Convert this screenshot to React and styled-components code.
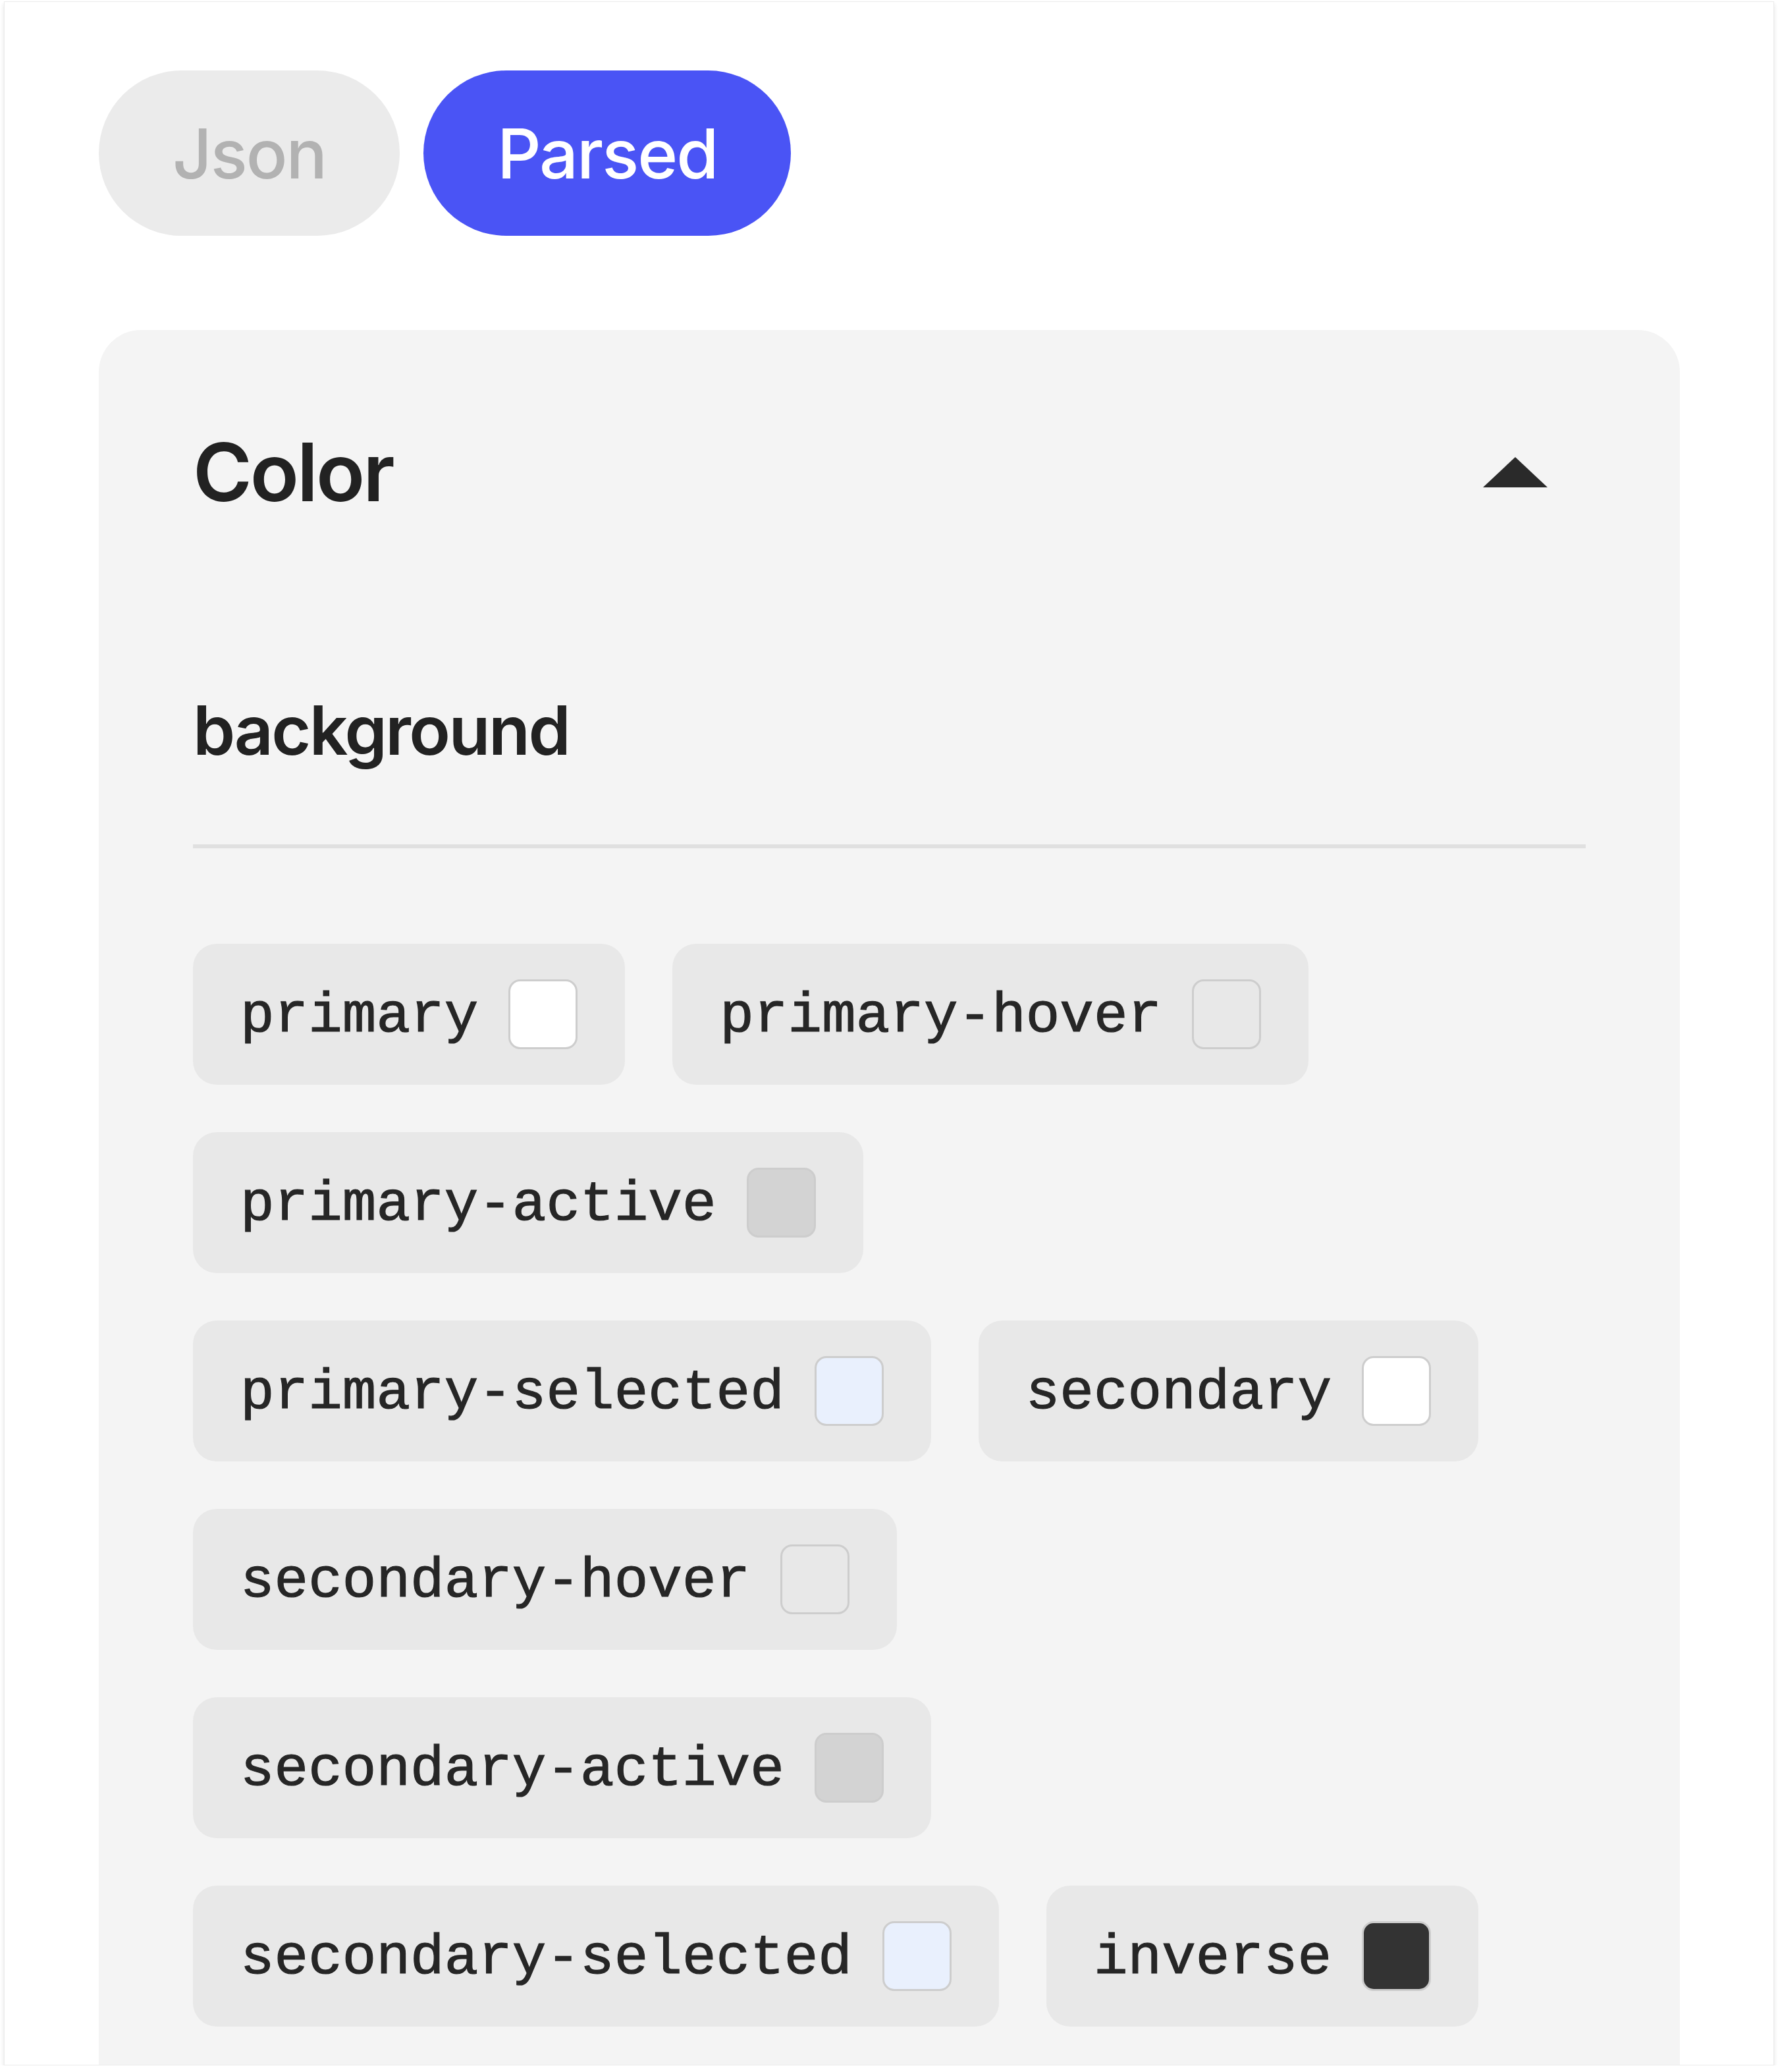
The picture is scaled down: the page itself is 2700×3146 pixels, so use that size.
import React from "react";
import styled, { createGlobalStyle } from "styled-components";

const Global = createGlobalStyle`
  html, body { margin: 0; padding: 0; background: #ffffff; }
  body { font-family: Inter, "Noto Sans", sans-serif; }
`;

const Frame = styled.div`
  box-sizing: border-box;
  margin: 2px 0 0 6px;
  width: 2688px;
  height: 3134px;
  background: #ffffff;
  border: 1px solid #ececec;
  box-shadow: 0 4px 6px rgba(0, 0, 0, 0.12);
  overflow: hidden;
  padding: 104px 142px 0 143px;
`;

const Tabs = styled.div`
  display: flex;
  gap: 36px;
`;

const Tab = styled.button`
  box-sizing: border-box;
  height: 251px;
  padding: 0 112px;
  border: none;
  border-radius: 126px;
  font-family: Inter, "Noto Sans", sans-serif;
  font-weight: 500;
  font-size: 104px;
  letter-spacing: -0.02em;
  line-height: 1;
  background: ${(p) => (p.$active ? "#4a54f5" : "#ebebeb")};
  color: ${(p) => (p.$active ? "#ffffff" : "#b2b2b2")};
`;

const Card = styled.section`
  margin-top: 143px;
  background: #f4f4f4;
  border-radius: 64px;
  padding: 143px 143px;
`;

const CardHeader = styled.div`
  display: flex;
  align-items: center;
  justify-content: space-between;
  height: 146px;
`;

const CardTitle = styled.h2`
  margin: 0;
  font-family: Inter, "Noto Sans", sans-serif;
  font-weight: 600;
  font-size: 122px;
  letter-spacing: -0.025em;
  line-height: 1;
  color: #222222;
`;

const Caret = styled.svg`
  width: 98px;
  height: 46px;
  margin-right: 58px;
  fill: #2a2a2a;
`;

const GroupTitle = styled.h3`
  margin: 256px 0 0;
  font-family: Inter, "Noto Sans", sans-serif;
  font-weight: 600;
  font-size: 103px;
  letter-spacing: -0.025em;
  line-height: 125px;
  color: #222222;
`;

const Divider = styled.div`
  margin-top: 111px;
  height: 6px;
  background: #e0e0e0;
`;

const ChipList = styled.div`
  margin-top: 145px;
  display: flex;
  flex-wrap: wrap;
  gap: 72px;
`;

const Chip = styled.div`
  display: inline-flex;
  align-items: center;
  gap: 46px;
  padding: 54px 72px;
  background: #e8e8e8;
  border-radius: 36px;
`;

const ChipName = styled.span`
  padding-top: 6px;
  font-family: "Liberation Mono", "DejaVu Sans Mono", monospace;
  font-size: 86px;
  line-height: 100px;
  color: #262626;
  -webkit-text-stroke: 1.2px #262626;
  white-space: nowrap;
`;

const Swatch = styled.span`
  box-sizing: border-box;
  width: 105px;
  height: 106px;
  border-radius: 18px;
  border: 3px solid #cdcdcd;
  background: ${(p) => p.$color};
`;

const colors = [
  ["primary", "#ffffff"],
  ["primary-hover", "#e8e8e8"],
  ["primary-active", "#d3d3d3"],
  ["primary-selected", "#e9f0fd"],
  ["secondary", "#ffffff"],
  ["secondary-hover", "#e8e8e8"],
  ["secondary-active", "#d3d3d3"],
  ["secondary-selected", "#e9f0fd"],
  ["inverse", "#333333"],
];

export default function App() {
  return (
    <>
      <Global />
      <Frame>
        <Tabs>
          <Tab>Json</Tab>
          <Tab $active>Parsed</Tab>
        </Tabs>
        <Card>
          <CardHeader>
            <CardTitle>Color</CardTitle>
            <Caret viewBox="0 0 98 46">
              <path d="M49 0 L98 46 L0 46 Z" />
            </Caret>
          </CardHeader>
          <GroupTitle>background</GroupTitle>
          <Divider />
          <ChipList>
            {colors.map(([name, c]) => (
              <Chip key={name}>
                <ChipName>{name}</ChipName>
                <Swatch $color={c} />
              </Chip>
            ))}
          </ChipList>
        </Card>
      </Frame>
    </>
  );
}
